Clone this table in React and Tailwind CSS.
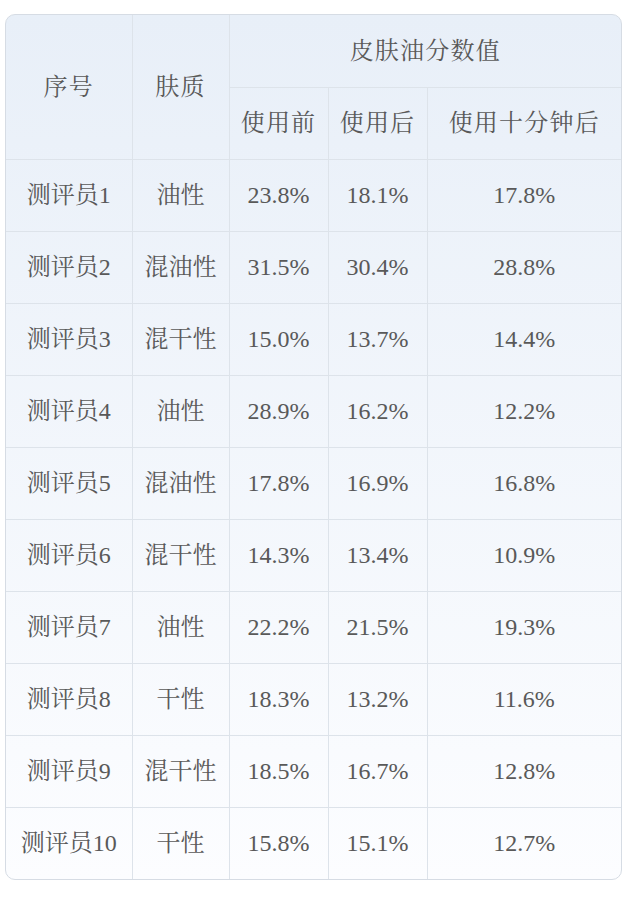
import React from 'react';

const rows = [
  ['测评员1', '油性', '23.8%', '18.1%', '17.8%'],
  ['测评员2', '混油性', '31.5%', '30.4%', '28.8%'],
  ['测评员3', '混干性', '15.0%', '13.7%', '14.4%'],
  ['测评员4', '油性', '28.9%', '16.2%', '12.2%'],
  ['测评员5', '混油性', '17.8%', '16.9%', '16.8%'],
  ['测评员6', '混干性', '14.3%', '13.4%', '10.9%'],
  ['测评员7', '油性', '22.2%', '21.5%', '19.3%'],
  ['测评员8', '干性', '18.3%', '13.2%', '11.6%'],
  ['测评员9', '混干性', '18.5%', '16.7%', '12.8%'],
  ['测评员10', '干性', '15.8%', '15.1%', '12.7%'],
];

export default function App() {
  return (
    <div className="bg-white w-[640px] h-[897px] pt-[14px] pl-[5px]">
      <div
        className="w-[617px] rounded-[10px] border border-[#d6dce4] overflow-hidden bg-gradient-to-b from-[#e8eff8] to-[#fcfdff] text-[#595959] text-[24px]"
        style={{ fontFamily: '"Liberation Serif", "Noto Serif CJK SC", "Noto Sans CJK SC", serif' }}
      >
        <table className="w-full table-fixed border-collapse text-center">
          <colgroup>
            <col className="w-[126px]" />
            <col className="w-[97px]" />
            <col className="w-[99px]" />
            <col className="w-[99px]" />
            <col />
          </colgroup>
          <thead className="tracking-[1.2px]">
            <tr className="h-[72px]">
              <th rowSpan={2} className="font-normal border-r border-b border-[#dde3ea]">序号</th>
              <th rowSpan={2} className="font-normal border-r border-b border-[#dde3ea]">肤质</th>
              <th colSpan={3} className="font-normal border-b border-[#dde3ea]">皮肤油分数值</th>
            </tr>
            <tr className="h-[72px]">
              <th className="font-normal border-r border-b border-[#dde3ea]">使用前</th>
              <th className="font-normal border-r border-b border-[#dde3ea]">使用后</th>
              <th className="font-normal border-b border-[#dde3ea]">使用十分钟后</th>
            </tr>
          </thead>
          <tbody>
            {rows.map((r, i) => (
              <tr key={i} className={i < rows.length - 1 ? 'h-[72px] border-b border-[#dde3ea]' : 'h-[72px]'}>
                {r.map((c, j) => (
                  <td key={j} className={j < 4 ? 'border-r border-[#dde3ea]' : ''}>
                    {c}
                  </td>
                ))}
              </tr>
            ))}
          </tbody>
        </table>
      </div>
    </div>
  );
}
